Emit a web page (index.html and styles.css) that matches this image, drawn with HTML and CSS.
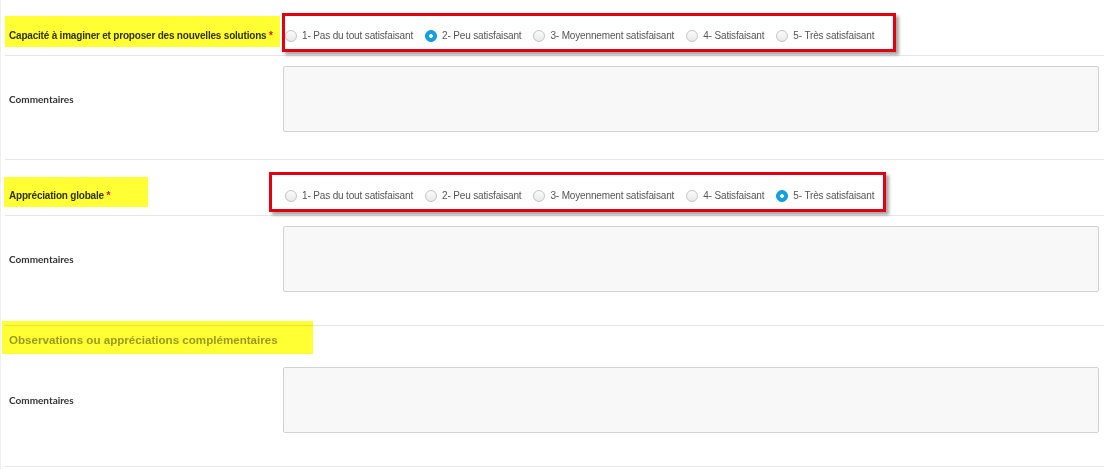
FILE: index.html
```html
<!DOCTYPE html>
<html lang="fr">
<head>
<meta charset="utf-8">
<title>Évaluation</title>
<link rel="stylesheet" href="styles.css">
</head>
<body>
<div class="page">
  <form class="form">
    <div class="q-row">
      <span class="hl hl-1"></span>
      <span class="redbox redbox-1"></span>
      <div class="q-label">Capacité à imaginer et proposer des nouvelles solutions <span class="req">*</span></div>
      <div class="options">
        <label class="opt"><input type="radio" name="q1"><span>1- Pas du tout satisfaisant</span></label>
        <label class="opt"><input type="radio" name="q1" checked><span>2- Peu satisfaisant</span></label>
        <label class="opt"><input type="radio" name="q1"><span>3- Moyennement satisfaisant</span></label>
        <label class="opt"><input type="radio" name="q1"><span>4- Satisfaisant</span></label>
        <label class="opt"><input type="radio" name="q1"><span>5- Très satisfaisant</span></label>
      </div>
    </div>
    <div class="c-row">
      <div class="c-label">Commentaires</div>
      <textarea class="comment"></textarea>
    </div>

    <div class="q-row">
      <span class="hl hl-2"></span>
      <span class="redbox redbox-2"></span>
      <div class="q-label">Appréciation globale <span class="req">*</span></div>
      <div class="options">
        <label class="opt"><input type="radio" name="q2"><span>1- Pas du tout satisfaisant</span></label>
        <label class="opt"><input type="radio" name="q2"><span>2- Peu satisfaisant</span></label>
        <label class="opt"><input type="radio" name="q2"><span>3- Moyennement satisfaisant</span></label>
        <label class="opt"><input type="radio" name="q2"><span>4- Satisfaisant</span></label>
        <label class="opt"><input type="radio" name="q2" checked><span>5- Très satisfaisant</span></label>
      </div>
    </div>
    <div class="c-row c-row-tall">
      <div class="c-label">Commentaires</div>
      <textarea class="comment"></textarea>
    </div>

    <div class="section-head">
      <span class="hl hl-3"></span>
      <h3 class="section-title">Observations ou appréciations complémentaires</h3>
    </div>
    <div class="c-row c-row-tall">
      <div class="c-label">Commentaires</div>
      <textarea class="comment"></textarea>
    </div>
  </form>
</div>
</body>
</html>
```
FILE: styles.css
```css
html, body {
  margin: 0;
  padding: 0;
  background: #ffffff;
}

.page {
  min-height: 469px;
  border-left: 1px solid #f0f0f0;
  box-sizing: border-box;
}

.form {
  margin: 0;
  padding: 0 9px 0 4px;
  font-family: "Liberation Sans", Arial, sans-serif;
  color: #333333;
}

/* question rows */
.q-row {
  position: relative;
  display: flex;
  align-items: center;
  height: 39px;
  padding-top: 16px;
  border-bottom: 1px solid #e6e6e6;
}

.q-label {
  width: 274px;
  flex: none;
  padding-left: 4px;
  font-size: 10px;
  font-weight: bold;
  letter-spacing: -0.2px;
  color: #333333;
  line-height: 14px;
}

.req {
  color: #e01010;
}

.options {
  display: flex;
  align-items: center;
  margin-left: 2px;
}

.opt {
  display: flex;
  align-items: center;
  margin-right: 12px;
  font-size: 10px;
  letter-spacing: -0.15px;
  color: #555555;
  line-height: 12px;
  white-space: nowrap;
}

.opt input {
  appearance: none;
  -webkit-appearance: none;
  margin: 0 5px 0 0;
  width: 12px;
  height: 12px;
  border-radius: 50%;
  border: 1px solid #c4c4c4;
  background: linear-gradient(#fbfbfb, #e9e9e9);
  box-sizing: border-box;
  flex: none;
}

.opt input:checked {
  border-color: #0b93d6;
  background: radial-gradient(circle, #ffffff 0 1.6px, #0ea2e6 2.2px);
}

/* comment rows */
.c-row {
  display: flex;
  align-items: center;
  padding: 10px 0 27px;
  border-bottom: 1px solid #e6e6e6;
}

.c-row-tall {
  padding-bottom: 33px;
}

.c-label {
  width: 274px;
  flex: none;
  padding-left: 4px;
  font-family: Lato, "Open Sans", sans-serif;
  font-size: 10px;
  font-weight: bold;
  color: #333333;
}

.comment {
  display: block;
  width: 816px;
  height: 66px;
  box-sizing: border-box;
  margin: 0;
  padding: 4px 6px;
  border: 1px solid #d2d2d2;
  border-radius: 2px;
  background: #f8f8f8;
  resize: none;
  font: inherit;
}

/* section heading */
.section-head {
  position: relative;
  padding: 7px 0 10px 4px;
}

.section-title {
  margin: 0;
  font-size: 11.6px;
  font-weight: bold;
  line-height: 14px;
  color: #9a9a9a;
}

/* annotation overlays (highlighter and red frames) */
.hl {
  position: absolute;
  background: #ffff33;
  mix-blend-mode: multiply;
  pointer-events: none;
  z-index: 2;
}

.hl-1 { left: 0; top: 16px; width: 275px; height: 31px; }
.hl-2 { left: -1px; top: 17px; width: 144px; height: 30px; }
.hl-3 { left: -3px; top: -5px; width: 311px; height: 33px; }

.redbox {
  position: absolute;
  border: 3px solid #e3000f;
  box-sizing: border-box;
  box-shadow: 3px 3px 3px rgba(0, 0, 0, 0.35);
  pointer-events: none;
  z-index: 3;
}

.redbox-1 { left: 277px; top: 13px; width: 614px; height: 39px; }
.redbox-2 { left: 264px; top: 12px; width: 617px; height: 40px; }
```
